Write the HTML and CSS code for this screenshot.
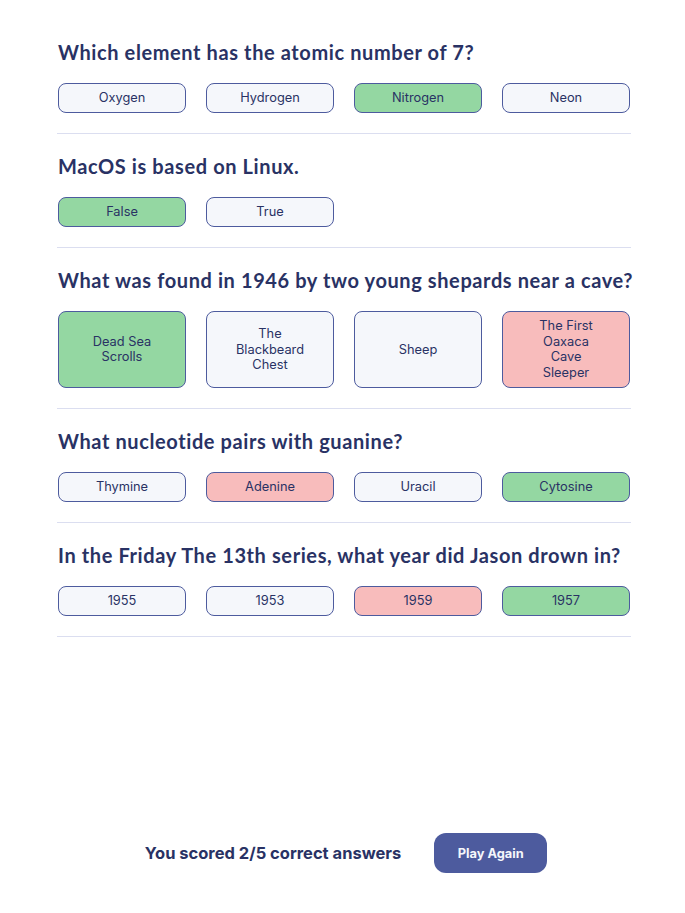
FILE: index.html
```html
<!DOCTYPE html>
<html lang="en">
<head>
<meta charset="utf-8">
<title>Quizzical</title>
<link rel="stylesheet" href="styles.css">
</head>
<body>
<main class="page">
  <section class="quiz">
    <div class="question">
      <h2 class="q-title">Which element has the atomic number of 7?</h2>
      <div class="answers">
        <div class="answer">Oxygen</div>
        <div class="answer">Hydrogen</div>
        <div class="answer correct">Nitrogen</div>
        <div class="answer">Neon</div>
      </div>
    </div>
    <div class="question">
      <h2 class="q-title">MacOS is based on Linux.</h2>
      <div class="answers">
        <div class="answer correct">False</div>
        <div class="answer">True</div>
      </div>
    </div>
    <div class="question">
      <h2 class="q-title">What was found in 1946 by two young shepards near a cave?</h2>
      <div class="answers">
        <div class="answer correct">Dead Sea Scrolls</div>
        <div class="answer">The Blackbeard Chest</div>
        <div class="answer">Sheep</div>
        <div class="answer wrong">The First Oaxaca Cave Sleeper</div>
      </div>
    </div>
    <div class="question">
      <h2 class="q-title">What nucleotide pairs with guanine?</h2>
      <div class="answers">
        <div class="answer">Thymine</div>
        <div class="answer wrong">Adenine</div>
        <div class="answer">Uracil</div>
        <div class="answer correct">Cytosine</div>
      </div>
    </div>
    <div class="question">
      <h2 class="q-title">In the Friday The 13th series, what year did Jason drown in?</h2>
      <div class="answers">
        <div class="answer">1955</div>
        <div class="answer">1953</div>
        <div class="answer wrong">1959</div>
        <div class="answer correct">1957</div>
      </div>
    </div>
  </section>
  <footer class="result">
    <p class="score">You scored 2/5 correct answers</p>
    <button class="play">Play Again</button>
  </footer>
</main>
</body>
</html>
```
FILE: styles.css
```css
* { box-sizing: border-box; }
html, body { margin: 0; padding: 0; background: #ffffff; }
body { font-family: Inter, "Liberation Sans", sans-serif; color: #293264; }

.page {
  min-height: 913px;
  padding: 40px 54px 40px 57px;
  display: flex;
  flex-direction: column;
}

.question {
  padding: 0 0 20px 0;
  border-bottom: 1px solid #DBDEF0;
  margin-bottom: 20px;
}

.q-title {
  margin: 0 0 19px 1px;
  font-family: Lato, "Open Sans", sans-serif;
  font-weight: 700;
  font-size: 20px;
  line-height: 24px;
  letter-spacing: 0.6px;
  white-space: nowrap;
  color: #293264;
}

.answers {
  display: grid;
  grid-template-columns: repeat(4, 128px);
  column-gap: 20px;
  padding-left: 1px;
  align-items: stretch;
}

.answer {
  border: 1px solid #4D5B9E;
  border-radius: 8px;
  background: #F5F7FB;
  font-size: 12.8px;
  line-height: 15.5px;
  padding: 6.25px 28px;
  text-align: center;
  display: flex;
  align-items: center;
  justify-content: center;
  color: #293264;
}

.answer.correct { background: #94D7A2; }
.answer.wrong { background: #F8BCBC; }

.result {
  margin-top: auto;
  display: flex;
  align-items: center;
  justify-content: center;
  gap: 33px;
  padding-left: 4px;
}

.score {
  margin: 0;
  font-weight: 700;
  font-size: 16.5px;
  letter-spacing: 0;
  color: #293264;
}

.play {
  width: 113px;
  height: 40px;
  border: none;
  border-radius: 12px;
  background: #4D5B9E;
  color: #F5F7FB;
  font-family: Inter, "Liberation Sans", sans-serif;
  font-weight: 700;
  font-size: 12.8px;
}
```
